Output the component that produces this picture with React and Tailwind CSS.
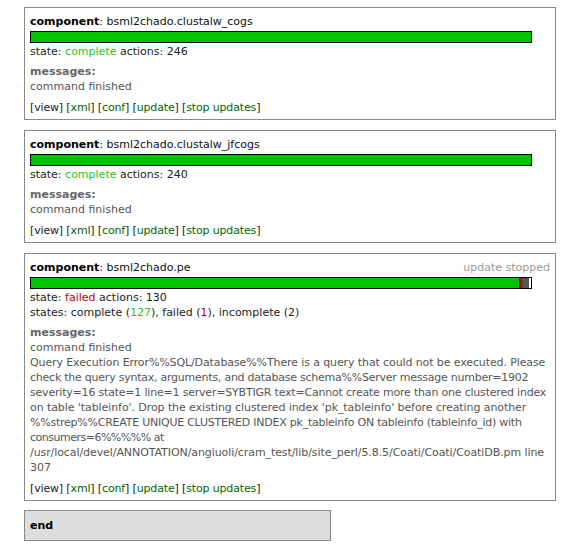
import React from "react";

const font = { fontFamily: '"DejaVu Sans", Verdana, sans-serif' };

function Links() {
  return (
    <div className="mt-[6px] text-[#222] tracking-[-0.15px]">
      [view] [<span className="text-[#006600]">xml</span>] [<span className="text-[#006600]">conf</span>] [<span className="text-[#006600]">update</span>] [<span className="text-[#006600]">stop updates</span>]
    </div>
  );
}

function Box({ name, children, stopped }) {
  return (
    <div className="ml-[24px] w-[532px] border border-[#888] bg-white pl-[5px] pr-[5px] pt-[6px] pb-[4px]">
      <div className="flex justify-between">
        <div className="text-[#111]">
          <span className="font-bold text-black">component</span>: {name}
        </div>
        {stopped && <div className="text-[#999]">update stopped</div>}
      </div>
      {children}
    </div>
  );
}

function Bar({ segments }) {
  return (
    <div className="mt-[2px] mb-[1px] flex h-[12px] w-[502px] border border-black bg-white">
      {segments.map((s, i) => (
        <div key={i} className={s.c} style={{ width: s.w }} />
      ))}
    </div>
  );
}

export default function App() {
  return (
    <div className="bg-white text-[11px] leading-[15px] pt-[7px] pb-[4px] min-h-[545px]" style={font}>
      <Box name="bsml2chado.clustalw_cogs">
        <Bar segments={[{ c: "bg-[#00c400]", w: 500 }]} />
        <div className="text-[#222]">
          state: <span className="text-[#1fc41f]">complete</span> actions: 246
        </div>
        <div className="mt-[5px] font-bold text-[#666]">messages:</div>
        <div className="text-[#555]">command finished</div>
        <Links />
      </Box>
      <div className="h-[10px]" />
      <Box name="bsml2chado.clustalw_jfcogs">
        <Bar segments={[{ c: "bg-[#00c400]", w: 500 }]} />
        <div className="text-[#222]">
          state: <span className="text-[#1fc41f]">complete</span> actions: 240
        </div>
        <div className="mt-[5px] font-bold text-[#666]">messages:</div>
        <div className="text-[#555]">command finished</div>
        <Links />
      </Box>
      <div className="h-[10px]" />
      <Box name="bsml2chado.pe" stopped>
        <Bar
          segments={[
            { c: "bg-[#00c400]", w: 488 },
            { c: "bg-[#c00000]", w: 3 },
            { c: "bg-[#555555]", w: 7 },
            { c: "bg-white", w: 2 },
          ]}
        />
        <div className="text-[#222]">
          state: <span className="text-[#c00000]">failed</span> actions: 130
        </div>
        <div className="text-[#222]">
          states: complete (<span className="text-[#1fc41f]">127</span>), failed (<span className="text-[#c00000]">1</span>), incomplete (2)
        </div>
        <div className="mt-[5px] font-bold text-[#666]">messages:</div>
        <div className="text-[#555] whitespace-nowrap">
          <div>command finished</div>
          <div className="tracking-[-0.11px]">Query Execution Error%%SQL/Database%%There is a query that could not be executed. Please</div>
          <div className="tracking-[-0.24px]">check the query syntax, arguments, and database schema%%Server message number=1902</div>
          <div className="tracking-[-0.2px]">severity=16 state=1 line=1 server=SYBTIGR text=Cannot create more than one clustered index</div>
          <div className="tracking-[-0.08px]">on table 'tableinfo'. Drop the existing clustered index 'pk_tableinfo' before creating another</div>
          <div className="tracking-[-0.24px]">%%strep%%CREATE UNIQUE CLUSTERED INDEX pk_tableinfo ON tableinfo (tableinfo_id) with</div>
          <div className="tracking-[-0.5px]">consumers=6%%%%% at</div>
          <div className="tracking-[-0.08px]">/usr/local/devel/ANNOTATION/angiuoli/cram_test/lib/site_perl/5.8.5/Coati/Coati/CoatiDB.pm line</div>
          <div>307</div>
        </div>
        <Links />
      </Box>
      <div className="h-[9px]" />
      <div className="ml-[24px] w-[307px] border border-[#888] bg-[#dddddd] pl-[5px] pt-[7px] pb-[7px] font-bold text-black">
        end
      </div>
    </div>
  );
}
